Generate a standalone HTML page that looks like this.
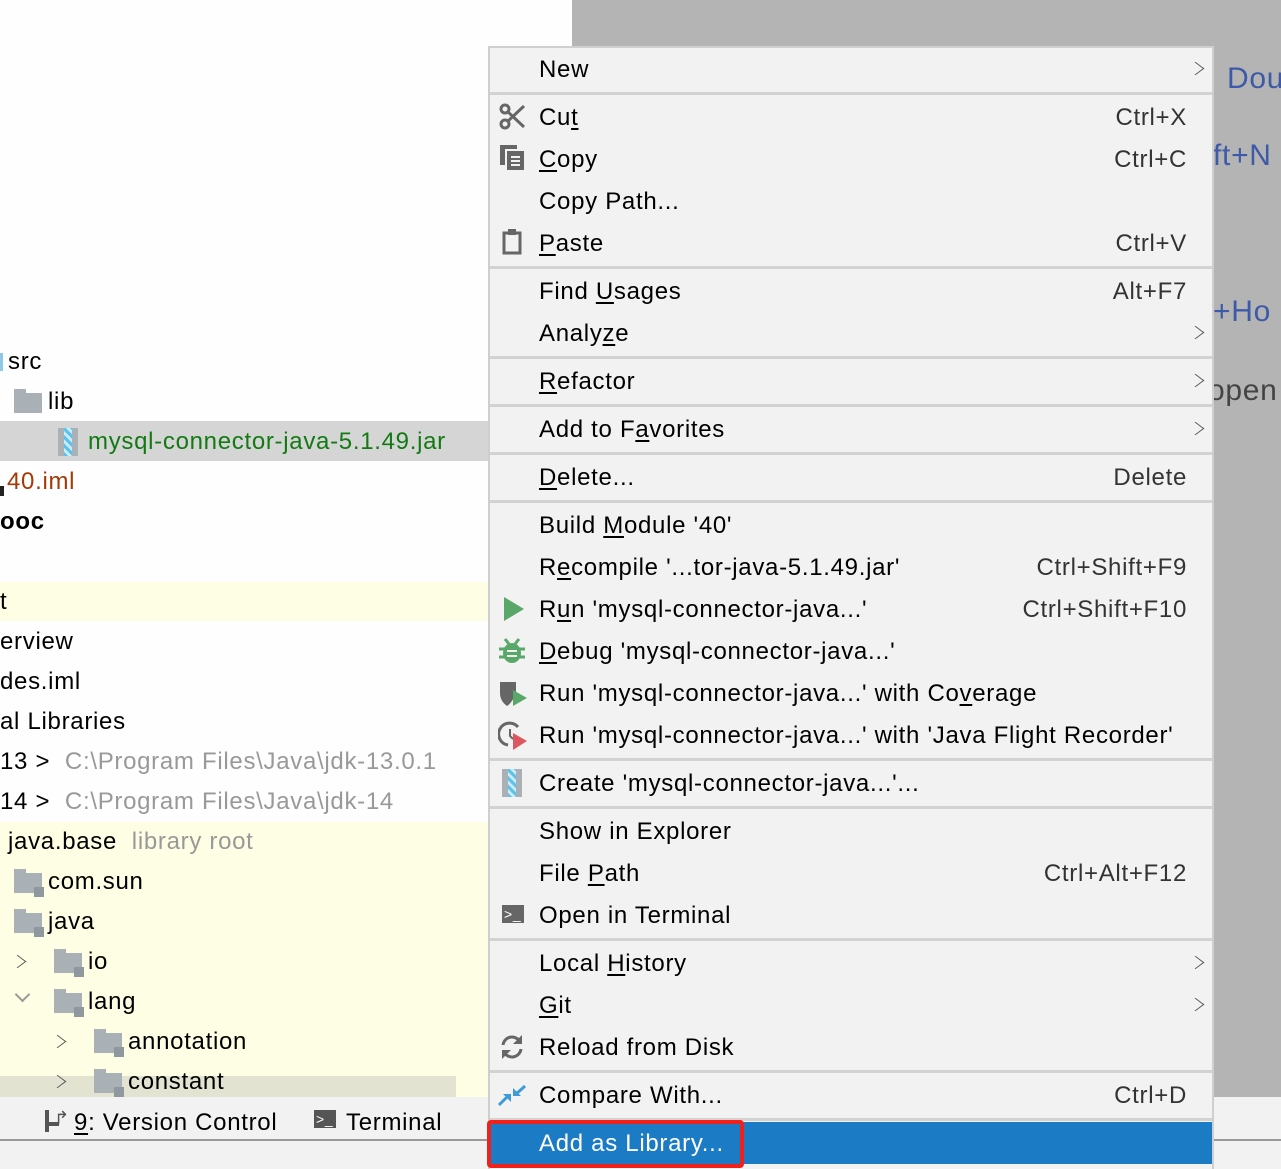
<!DOCTYPE html>
<html><head><meta charset="utf-8"><style>
*{margin:0;padding:0;box-sizing:border-box}
body{width:1281px;height:1169px;position:relative;overflow:hidden;background:#fefefe;font-family:"Liberation Sans","DejaVu Sans",sans-serif;font-size:24px;color:#000}
.a{position:absolute}
.t{position:absolute;white-space:nowrap;line-height:30px;font-size:24px;letter-spacing:0.7px}
.k{position:absolute;right:94px;white-space:nowrap;line-height:30px;color:#333;letter-spacing:0.7px}
.sep{position:absolute;left:490px;width:722px;height:3px;background:#d2d2d2}
.ch{position:absolute;left:1190px;width:12px;height:20px}
.ch:before{content:"";position:absolute;left:0;top:2px;width:10px;height:10px;border-right:1.5px solid #555;border-top:1.5px solid #555;transform:rotate(45deg) skew(-8deg,-8deg)}
u{text-decoration:underline;text-underline-offset:3px}
.fold{position:absolute;width:28px;height:20px;background:#a9b1b6}
.fold:before{content:"";position:absolute;left:0;top:-4px;width:12px;height:5px;background:#a9b1b6}
.lock{position:absolute;width:10px;height:10px;background:#8f989e}
</style></head><body>
<div class="a" style="left:572px;top:0;width:709px;height:1097px;background:#b4b4b4"></div>
<div class="t" style="left:1227px;top:63px;color:#3d5aa8;font-size:30px;line-height:32px">Dou</div>
<div class="t" style="left:1213px;top:140px;color:#3d5aa8;font-size:30px;line-height:32px">ft+N</div>
<div class="t" style="left:1213px;top:296px;color:#3d5aa8;font-size:30px;line-height:32px">+Ho</div>
<div class="t" style="left:1208px;top:375px;color:#444;font-size:30px;line-height:32px">open</div>

<div class="a" style="left:0;top:421px;width:488px;height:40px;background:#d5d5d5"></div>
<div class="a" style="left:0;top:582px;width:488px;height:39px;background:#fefee4"></div>
<div class="a" style="left:0;top:822px;width:488px;height:275px;background:#fefee4"></div>
<div class="a" style="left:0;top:1076px;width:456px;height:21px;background:#e3e3d2"></div>
<div class="a" style="left:0;top:353px;width:3px;height:18px;background:#8fc9e3"></div>
<div class="t" style="left:8px;top:347px">src</div>
<div class="fold" style="left:14px;top:393px"></div>
<div class="t" style="left:48px;top:387px">lib</div>
<div class="a" style="left:58px;top:428px;width:20px;height:28px;background:#a9b1b6"></div>
<div class="a" style="left:64px;top:428px;width:8px;height:28px;background:repeating-linear-gradient(45deg,#5ec3ea 0 3px,#cdeaf5 3px 6px)"></div>
<div class="t" style="left:88px;top:427px;color:#127a12">mysql-connector-java-5.1.49.jar</div>
<div class="a" style="left:0;top:486px;width:4px;height:10px;background:#222"></div>
<div class="t" style="left:7px;top:467px;color:#a33a07">40.iml</div>
<div class="t" style="left:0;top:507px;font-weight:bold">ooc</div>
<div class="t" style="left:0;top:587px">t</div>
<div class="t" style="left:0;top:627px">erview</div>
<div class="t" style="left:0;top:667px">des.iml</div>
<div class="t" style="left:0;top:707px">al Libraries</div>
<div class="t" style="left:0;top:747px">13 &gt;&nbsp; <span style="color:#999">C:\Program Files\Java\jdk-13.0.1</span></div>
<div class="t" style="left:0;top:787px">14 &gt;&nbsp; <span style="color:#999">C:\Program Files\Java\jdk-14</span></div>
<div class="t" style="left:8px;top:827px">java.base&nbsp; <span style="color:#999">library root</span></div>
<div class="fold" style="left:14px;top:873px"></div><div class="lock" style="left:34px;top:887px"></div>
<div class="t" style="left:48px;top:867px">com.sun</div>
<div class="fold" style="left:14px;top:913px"></div><div class="lock" style="left:34px;top:927px"></div>
<div class="t" style="left:48px;top:907px">java</div>
<div class="ch" style="left:12px;top:954px"></div>
<div class="fold" style="left:54px;top:953px"></div><div class="lock" style="left:74px;top:967px"></div>
<div class="t" style="left:88px;top:947px">io</div>
<div class="a" style="left:17px;top:989px;width:11px;height:11px;border-right:2px solid #999;border-bottom:2px solid #999;transform:rotate(45deg)"></div>
<div class="fold" style="left:54px;top:993px"></div><div class="lock" style="left:74px;top:1007px"></div>
<div class="t" style="left:88px;top:987px">lang</div>
<div class="ch" style="left:52px;top:1034px"></div>
<div class="fold" style="left:94px;top:1033px"></div><div class="lock" style="left:114px;top:1047px"></div>
<div class="t" style="left:128px;top:1027px">annotation</div>
<div class="ch" style="left:52px;top:1074px"></div>
<div class="fold" style="left:94px;top:1073px"></div><div class="lock" style="left:114px;top:1087px"></div>
<div class="t" style="left:128px;top:1067px">constant</div>

<div class="a" style="left:0;top:1097px;width:1281px;height:72px;background:#f2f2f2"></div>
<div class="a" style="left:0;top:1139px;width:1281px;height:2px;background:#999"></div>
<div class="a" style="left:45px;top:1110px;width:4px;height:22px;background:#555"></div>
<div class="a" style="left:45px;top:1122px;width:14px;height:4px;background:#555"></div>
<div class="t" style="left:54px;top:1103px;font-size:18px;color:#555">↱</div>
<div class="t" style="left:74px;top:1108px"><u>9</u>: Version Control</div>
<div class="a" style="left:314px;top:1110px;width:22px;height:18px;background:#555"></div>
<div class="t" style="left:316px;top:1104px;color:#fff;font-size:14px">&gt;_</div>
<div class="t" style="left:346px;top:1108px">Terminal</div>

<div class="a" style="left:488px;top:46px;width:726px;height:1123px;background:#f2f2f2;border:2px solid #cfcfcf;border-bottom:none"></div>
<div class="sep" style="top:92px"></div>
<div class="sep" style="top:266px"></div>
<div class="sep" style="top:356px"></div>
<div class="sep" style="top:404px"></div>
<div class="sep" style="top:452px"></div>
<div class="sep" style="top:500px"></div>
<div class="sep" style="top:758px"></div>
<div class="sep" style="top:806px"></div>
<div class="sep" style="top:938px"></div>
<div class="sep" style="top:1070px"></div>
<div class="sep" style="top:1118px"></div>
<div class="a" style="left:490px;top:1122px;width:722px;height:42px;background:#1b7bc4"></div>
<div class="a" style="left:487px;top:1120px;width:257px;height:48px;border:4px solid #f0201b;border-radius:4px"></div>

<div class="t" style="left:539px;top:55px">New</div><div class="ch" style="top:61px"></div>
<svg class="a" style="left:498px;top:103px" width="28" height="28" viewBox="0 0 28 28"><circle cx="7" cy="6" r="4" fill="none" stroke="#666" stroke-width="3"/><circle cx="7" cy="21" r="4" fill="none" stroke="#666" stroke-width="3"/><path d="M10 9 L26 24 M10 18 L26 3" stroke="#666" stroke-width="3"/></svg>
<div class="t" style="left:539px;top:103px">Cu<u>t</u></div><div class="k" style="top:103px">Ctrl+X</div>
<svg class="a" style="left:500px;top:145px" width="24" height="26"><rect x="0" y="0" width="5" height="20" fill="#666"/><rect x="0" y="0" width="17" height="4" fill="#666"/><rect x="7" y="6" width="17" height="19" fill="#666"/><path d="M11 12h9M11 16h9M11 20h9" stroke="#f2f2f2" stroke-width="2"/></svg>
<div class="t" style="left:539px;top:145px"><u>C</u>opy</div><div class="k" style="top:145px">Ctrl+C</div>
<div class="t" style="left:539px;top:187px">Copy Path...</div>
<svg class="a" style="left:502px;top:229px" width="20" height="26"><rect x="2" y="4" width="16" height="20" fill="none" stroke="#666" stroke-width="3"/><rect x="6" y="0" width="8" height="6" fill="#666"/></svg>
<div class="t" style="left:539px;top:229px"><u>P</u>aste</div><div class="k" style="top:229px">Ctrl+V</div>
<div class="t" style="left:539px;top:277px">Find <u>U</u>sages</div><div class="k" style="top:277px">Alt+F7</div>
<div class="t" style="left:539px;top:319px">Analy<u>z</u>e</div><div class="ch" style="top:325px"></div>
<div class="t" style="left:539px;top:367px"><u>R</u>efactor</div><div class="ch" style="top:373px"></div>
<div class="t" style="left:539px;top:415px">Add to F<u>a</u>vorites</div><div class="ch" style="top:421px"></div>
<div class="t" style="left:539px;top:463px"><u>D</u>elete...</div><div class="k" style="top:463px">Delete</div>
<div class="t" style="left:539px;top:511px">Build <u>M</u>odule '40'</div>
<div class="t" style="left:539px;top:553px">R<u>e</u>compile '...tor-java-5.1.49.jar'</div><div class="k" style="top:553px">Ctrl+Shift+F9</div>
<svg class="a" style="left:502px;top:596px" width="22" height="26"><path d="M2 1 L22 13 L2 25Z" fill="#59a869"/></svg>
<div class="t" style="left:539px;top:595px">R<u>u</u>n 'mysql-connector-java...'</div><div class="k" style="top:595px">Ctrl+Shift+F10</div>
<svg class="a" style="left:498px;top:637px" width="28" height="28"><path d="M7 2l4 5M21 2l-4 5" stroke="#59a869" stroke-width="3"/><ellipse cx="14" cy="16" rx="9" ry="10" fill="#59a869"/><path d="M1 12h26M1 20h26" stroke="#59a869" stroke-width="3"/><path d="M9 14h10M9 19h10" stroke="#f2f2f2" stroke-width="2"/></svg>
<div class="t" style="left:539px;top:637px"><u>D</u>ebug 'mysql-connector-java...'</div>
<svg class="a" style="left:498px;top:679px" width="30" height="30"><path d="M2 3 L18 3 L18 14 Q14 24 9 27 Q2 22 2 14Z" fill="#666"/><path d="M15 11 L29 19 L15 27Z" fill="#59a869"/></svg>
<div class="t" style="left:539px;top:679px">Run 'mysql-connector-java...' with Co<u>v</u>erage</div>
<svg class="a" style="left:498px;top:721px" width="30" height="30"><path d="M20 6 A11 11 0 1 0 10 24" fill="none" stroke="#666" stroke-width="3"/><path d="M12 8v7l3 3" stroke="#666" stroke-width="2" fill="none"/><path d="M15 12 L29 20 L15 29Z" fill="#db5860"/></svg>
<div class="t" style="left:539px;top:721px">Run 'mysql-connector-java...' with 'Java Flight Recorder'</div>
<div class="a" style="left:502px;top:769px;width:20px;height:28px;background:#a9b1b6"></div>
<div class="a" style="left:508px;top:769px;width:8px;height:28px;background:repeating-linear-gradient(45deg,#5ec3ea 0 3px,#cdeaf5 3px 6px)"></div>
<div class="t" style="left:539px;top:769px">Create 'mysql-connector-java...'...</div>
<div class="t" style="left:539px;top:817px">Show in Explorer</div>
<div class="t" style="left:539px;top:859px">File <u>P</u>ath</div><div class="k" style="top:859px">Ctrl+Alt+F12</div>
<div class="a" style="left:502px;top:905px;width:22px;height:18px;background:#666"></div>
<div class="t" style="left:504px;top:899px;color:#fff;font-size:14px">&gt;_</div>
<div class="t" style="left:539px;top:901px">Open in Terminal</div>
<div class="t" style="left:539px;top:949px">Local <u>H</u>istory</div><div class="ch" style="top:955px"></div>
<div class="t" style="left:539px;top:991px"><u>G</u>it</div><div class="ch" style="top:997px"></div>
<svg class="a" style="left:499px;top:1034px" width="26" height="26"><path d="M4 11 A9 9 0 0 1 21 8" fill="none" stroke="#666" stroke-width="3"/><path d="M23 1v9h-9z" fill="#666"/><path d="M22 15 A9 9 0 0 1 5 18" fill="none" stroke="#666" stroke-width="3"/><path d="M3 25v-9h9z" fill="#666"/></svg>
<div class="t" style="left:539px;top:1033px">Reload from Disk</div>
<svg class="a" style="left:497px;top:1081px" width="30" height="28"><path d="M2 24 L12 14" stroke="#3d9bd8" stroke-width="3"/><path d="M6 13 L14 13 L14 21Z" fill="#3d9bd8"/><path d="M28 5 L18 14" stroke="#3d9bd8" stroke-width="3"/><path d="M24 15 L16 15 L16 7Z" fill="#3d9bd8"/></svg>
<div class="t" style="left:539px;top:1081px">Compare With...</div><div class="k" style="top:1081px">Ctrl+D</div>
<div class="t" style="left:539px;top:1129px;color:#fff">Add as Library...</div>
</body></html>
